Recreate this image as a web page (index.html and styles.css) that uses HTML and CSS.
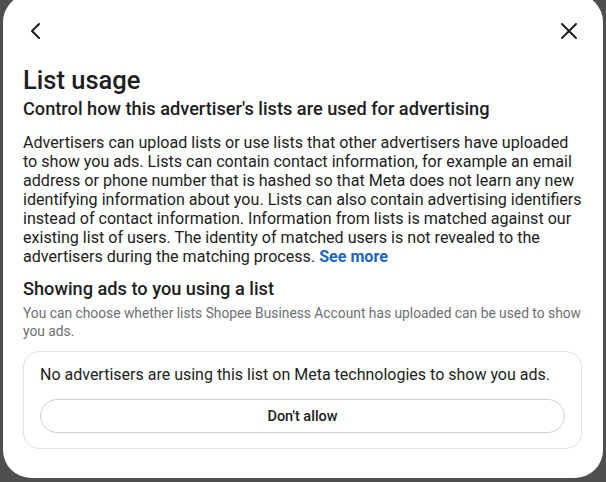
FILE: index.html
```html
<!DOCTYPE html>
<html lang="en">
<head>
<meta charset="utf-8">
<title>List usage</title>
<link rel="stylesheet" href="styles.css">
</head>
<body>
<div class="backdrop">
  <div class="modal">
    <div class="toolbar">
      <button class="icon-btn" aria-label="Back">
        <svg width="16" height="18" viewBox="0 0 16 18"><path d="M11 2 L4 9 L11 16" fill="none" stroke="#1c1e21" stroke-width="2" stroke-linecap="round" stroke-linejoin="round"/></svg>
      </button>
      <button class="icon-btn" aria-label="Close">
        <svg width="18" height="18" viewBox="0 0 18 18"><path d="M2 2 L16 16 M16 2 L2 16" fill="none" stroke="#1c1e21" stroke-width="2" stroke-linecap="round"/></svg>
      </button>
    </div>
    <h1 class="title">List usage</h1>
    <h2 class="subtitle">Control how this advertiser's lists are used for advertising</h2>
    <p class="body-text">Advertisers can upload lists or use lists that other advertisers have uploaded<br>to show you ads. Lists can contain contact information, for example an email<br>address or phone number that is hashed so that Meta does not learn any new<br>identifying information about you. Lists can also contain advertising identifiers<br>instead of contact information. Information from lists is matched against our<br>existing list of users. The identity of matched users is not revealed to the<br>advertisers during the matching process. <a class="link" href="#">See more</a></p>
    <h3 class="section-title">Showing ads to you using a list</h3>
    <p class="muted">You can choose whether lists Shopee Business Account has uploaded can be used to show<br>you ads.</p>
    <div class="card">
      <p class="card-text">No advertisers are using this list on Meta technologies to show you ads.</p>
      <button class="pill">Don't allow</button>
    </div>
  </div>
</div>
</body>
</html>
```
FILE: styles.css
```css
html, body {
  margin: 0;
  padding: 0;
  height: 100%;
  overflow: hidden;
}
body {
  background: #4e4e4e;
  font-family: Roboto, "Liberation Sans", sans-serif;
  color: #1c1e21;
}
.backdrop {
  padding-left: 3px;
}
.modal {
  width: 600px;
  height: 484px;
  margin-top: -6px;
  background: #fff;
  border-radius: 28px;
  box-sizing: border-box;
  padding: 24px 21px 0 20px;
}
.toolbar {
  display: flex;
  justify-content: space-between;
  align-items: center;
  height: 26px;
}
.icon-btn {
  background: none;
  border: 0;
  padding: 0;
  display: flex;
  align-items: center;
  justify-content: center;
  width: 26px;
  height: 26px;
}
.title {
  margin: 21px 0 0;
  font-size: 25.5px;
  font-weight: 500;
  line-height: 30px;
}
.subtitle {
  margin: 2px 0 0;
  font-size: 18.2px;
  font-weight: 500;
  line-height: 24px;
}
.body-text {
  margin: 12px 0 0;
  font-size: 16.1px;
  line-height: 19px;
  white-space: nowrap;
}
.link {
  color: #1b66c9;
  font-weight: 700;
  text-decoration: none;
}
.section-title {
  margin: 11px 0 0;
  font-size: 18.2px;
  font-weight: 500;
  line-height: 24px;
}
.muted {
  margin: 3px 0 0;
  font-size: 13.8px;
  line-height: 18px;
  color: #6b6f74;
  white-space: nowrap;
}
.card {
  margin-top: 11px;
  border: 1px solid #dfe1e4;
  border-radius: 16px;
  padding: 13px 16px 15px;
}
.card-text {
  margin: 0;
  font-size: 16px;
  line-height: 20px;
}
.pill {
  display: block;
  width: 100%;
  margin-top: 14px;
  height: 34px;
  border: 1px solid #ced0d4;
  border-radius: 17px;
  background: #fff;
  font-family: inherit;
  font-size: 14.5px;
  font-weight: 500;
  color: #1c1e21;
}
```
